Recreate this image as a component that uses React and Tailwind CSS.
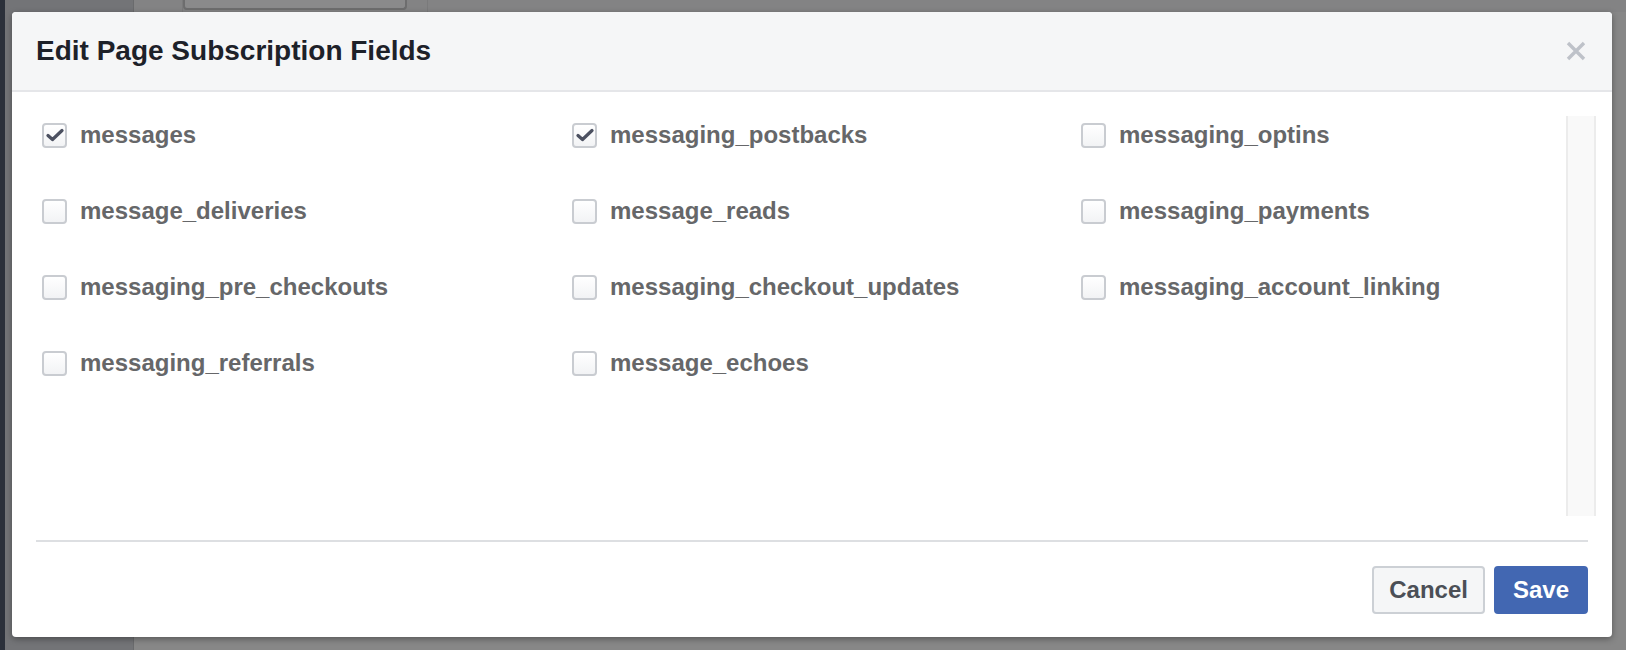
import React, { useState } from 'react';

const FIELDS = [
    { name: 'messages', checked: true },
    { name: 'messaging_postbacks', checked: true },
    { name: 'messaging_optins', checked: false },
    { name: 'message_deliveries', checked: false },
    { name: 'message_reads', checked: false },
    { name: 'messaging_payments', checked: false },
    { name: 'messaging_pre_checkouts', checked: false },
    { name: 'messaging_checkout_updates', checked: false },
    { name: 'messaging_account_linking', checked: false },
    { name: 'messaging_referrals', checked: false },
    { name: 'message_echoes', checked: false },
];

const Checkbox = ({ checked, onClick }) => (
    <button
        type="button"
        onClick={onClick}
        className="w-[25px] h-[25px] shrink-0 rounded-[4px] border-2 border-[#c9ccd1] bg-gradient-to-b from-white to-[#f2f3f5] flex items-center justify-center"
    >
        {checked && (
            <svg width="18" height="14" viewBox="0 0 18 14">
                <path d="M2 7.5 L6.5 11.5 L16 2.5" fill="none" stroke="#4b5060" strokeWidth="3.2" strokeLinecap="round" strokeLinejoin="round" />
            </svg>
        )}
    </button>
);

const App = () => {
    const [fields, setFields] = useState(FIELDS);

    const toggle = (index) => {
        const next = [...fields];
        next[index] = { ...next[index], checked: !next[index].checked };
        setFields(next);
    };

    return (
        <div className="relative w-[1626px] h-[650px] overflow-hidden bg-[#878787] font-['Liberation_Sans',Arial,sans-serif]">
            {/* page behind the overlay */}
            <div className="flex h-full">
                <div className="w-[5px] bg-[#2b303a]" />
                <div className="w-[129px] bg-[#737477] border-r border-[#6a6b6d]" />
                <div className="flex-1 flex flex-col">
                    <div className="h-[12px] flex bg-[#838384]">
                        <div className="w-[49px] border-r border-[#7a7a7b]" />
                        <div className="w-[224px] mb-[2px] border-2 border-t-0 border-[#6d6d6e] rounded-b-[4px] bg-[#8a8a8b]" />
                        <div className="w-[21px] border-r border-[#7a7a7b]" />
                    </div>
                    <div className="flex-1 bg-[#878787]" />
                </div>
            </div>

            {/* dialog */}
            <div className="absolute left-[12px] top-[12px] w-[1600px] h-[625px] bg-white rounded-[4px] shadow-[0_2px_6px_rgba(0,0,0,0.35)] flex flex-col overflow-hidden">
                <div className="h-[80px] shrink-0 bg-[#f5f6f7] border-b-2 border-[#e5e6e9] flex items-center justify-between pl-[24px] pr-[26px]">
                    <h1 className="text-[28px] font-bold text-[#1d2129] leading-none">Edit Page Subscription Fields</h1>
                    <button type="button" className="w-[20px] h-[20px] flex items-center justify-center">
                        <svg width="20" height="20" viewBox="0 0 20 20">
                            <path d="M2 2 L18 18 M18 2 L2 18" stroke="#bec2c9" strokeWidth="3.4" />
                        </svg>
                    </button>
                </div>

                <div className="flex-1 flex pl-[24px] pr-[16px] pt-[24px] pb-[24px]">
                    <div className="flex-1 grid grid-cols-[530px_509px_1fr] content-start gap-y-[50px] pl-[6px] pt-[6px]">
                        {fields.map((field, index) => (
                            <label key={field.name} className="flex items-center gap-[13px] h-[26px] cursor-pointer">
                                <Checkbox checked={field.checked} onClick={() => toggle(index)} />
                                <span className="text-[24px] font-bold text-[#666769] leading-none">{field.name}</span>
                            </label>
                        ))}
                    </div>
                    <div className="w-[30px] shrink-0 bg-[#f9f9f9] border-x-2 border-[#ececec]" />
                </div>

                <div className="mx-[24px] border-t-2 border-[#dddfe2] pt-[24px] pb-[23px] flex justify-end gap-[9px]">
                    <button type="button" className="h-[48px] px-[15px] rounded-[4px] border-2 border-[#ccd0d5] bg-[#f5f6f7] text-[24px] font-bold text-[#4b4f56]">
                        Cancel
                    </button>
                    <button type="button" className="h-[48px] px-[17px] rounded-[4px] border-2 border-[#4267b2] bg-[#4267b2] text-[24px] font-bold text-white">
                        Save
                    </button>
                </div>
            </div>
        </div>
    );
};

export default App;
